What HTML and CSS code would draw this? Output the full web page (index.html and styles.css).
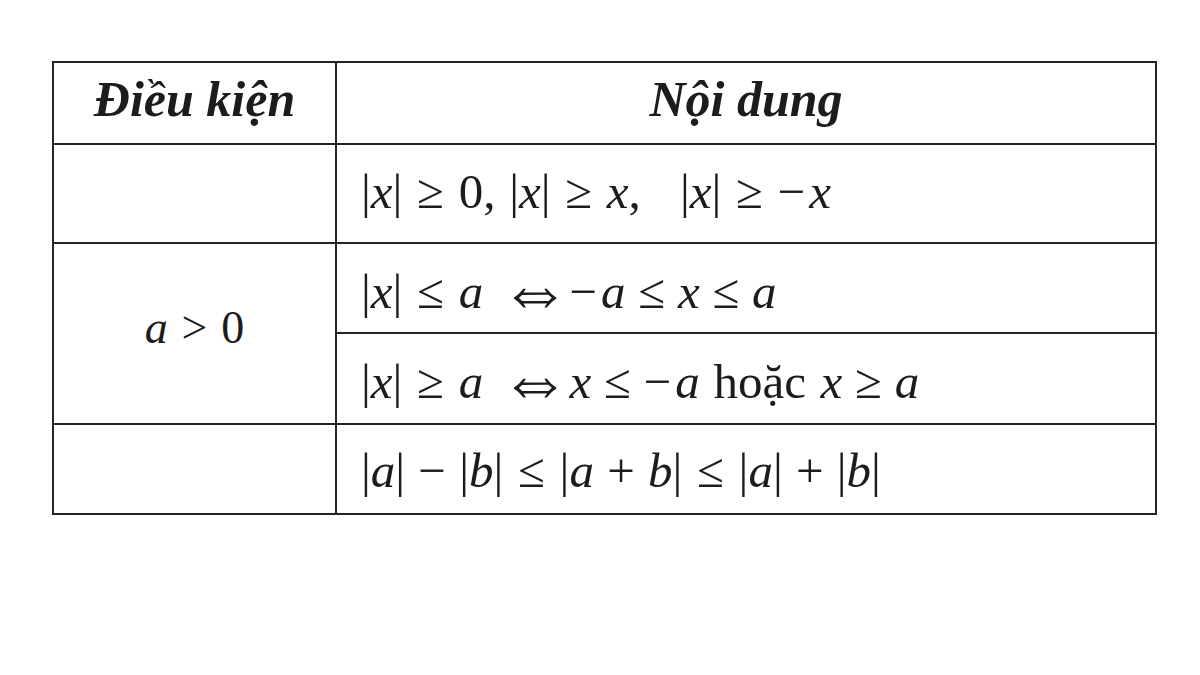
FILE: index.html
```html
<!DOCTYPE html>
<html lang="vi">
<head>
<meta charset="utf-8">
<title>Bất đẳng thức giá trị tuyệt đối</title>
<link rel="stylesheet" href="styles.css">
</head>
<body>
<table class="tbl">
  <colgroup><col class="c1"><col class="c2"></colgroup>
  <tr class="r-head">
    <th>Điều kiện</th>
    <th>Nội dung</th>
  </tr>
  <tr class="r1">
    <td class="cond"></td>
    <td class="math">|<i>x</i>|<span class="rel">≥</span>0,<span class="sp"></span>|<i>x</i>|<span class="rel">≥</span><i>x</i>,<span class="sp2"></span>|<i>x</i>|<span class="rel">≥</span><span class="neg">−</span><i>x</i></td>
  </tr>
  <tr class="r2">
    <td class="cond" rowspan="2"><i>a</i><span class="rel">&gt;</span>0</td>
    <td class="math">|<i>x</i>|<span class="rel">≤</span><i>a</i><span class="iff">⇔</span><span class="neg">−</span><i>a</i><span class="rel-t">≤</span><i>x</i><span class="rel-t">≤</span><i>a</i></td>
  </tr>
  <tr class="r3">
    <td class="math">|<i>x</i>|<span class="rel">≥</span><i>a</i><span class="iff">⇔</span><i>x</i><span class="rel-t">≤</span><span class="neg">−</span><i>a</i><span class="word">hoặc</span><i>x</i><span class="rel-t">≥</span><i>a</i></td>
  </tr>
  <tr class="r4">
    <td class="cond"></td>
    <td class="math">|<i>a</i>|<span class="bin">−</span>|<i>b</i>|<span class="rel">≤</span>|<i>a</i><span class="bin">+</span><i>b</i>|<span class="rel">≤</span>|<i>a</i>|<span class="bin">+</span>|<i>b</i>|</td>
  </tr>
</table>
</body>
</html>
```
FILE: styles.css
```css
html, body {
  margin: 0;
  padding: 0;
  background: #ffffff;
}
body {
  font-family: "Liberation Serif", "Times New Roman", serif;
  color: #1c1c1c;
}
.tbl {
  border-collapse: collapse;
  margin: 61px 0 0 52px;
  width: 1103px;
  table-layout: fixed;
}
.c1 { width: 283px; }
.c2 { width: 820px; }
.tbl th, .tbl td {
  border: 2px solid #262626;
  padding: 0;
  vertical-align: middle;
}
.tbl th {
  font-style: italic;
  font-weight: bold;
  font-size: 50px;
  text-align: center;
  padding-bottom: 8px;
}
.r-head { height: 82px; }
.r1 { height: 99px; }
.r2 { height: 90px; }
.r3 { height: 91px; }
.r4 { height: 90px; }
.tbl .cond {
  text-align: center;
  font-size: 46px;
  padding-bottom: 12px;
}
.tbl .math {
  font-size: 49px;
  padding-left: 24px;
  padding-top: 2px;
  white-space: nowrap;
}
.r1 .math { padding-top: 0; padding-bottom: 4px; }
.math i, .cond i {
  font-style: italic;
}
.rel { margin: 0 0.3em; }
.rel-t { margin: 0 0.26em; }
.bin { margin: 0 0.27em; }
.neg { margin-right: 0.08em; }
.sp { display: inline-block; width: 0.28em; }
.sp2 { display: inline-block; width: 0.8em; }
.iff {
  display: inline-block;
  font-family: "DejaVu Sans", sans-serif;
  font-weight: 200;
  font-size: 54px;
  transform: scale(1.32, 1.5);
  margin: 0 0.14em 0 0.46em;
}
.word { margin: 0 0.3em 0 0.28em; }
```
